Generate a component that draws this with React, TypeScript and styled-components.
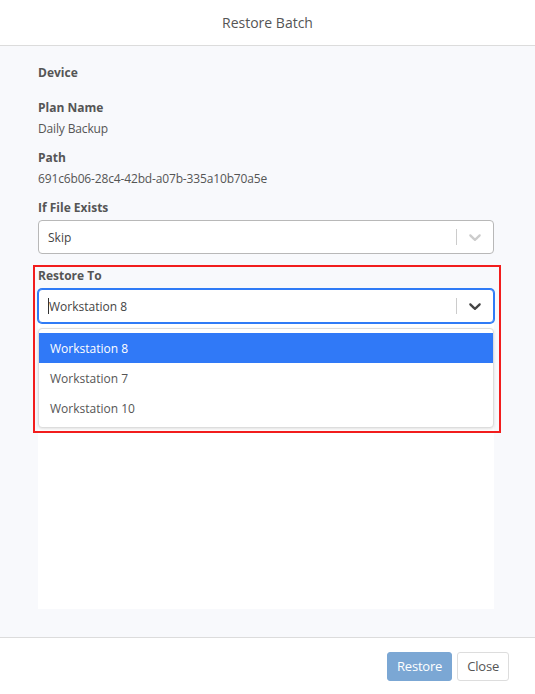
import styled, { createGlobalStyle } from "styled-components";

const GlobalStyle = createGlobalStyle`
  html, body {
    margin: 0;
    padding: 0;
    height: 100%;
  }
  body {
    font-family: "Open Sans", "Liberation Sans", sans-serif;
    color: #555;
    background: #fff;
  }
  #root {
    height: 100%;
  }
  * {
    box-sizing: border-box;
  }
`;

const Modal = styled.div`
  display: flex;
  flex-direction: column;
  height: 100vh;
  background: #fff;
`;

const Header = styled.div`
  height: 46px;
  border-bottom: 1px solid #dcdcdc;
  display: flex;
  align-items: center;
  justify-content: center;
  font-size: 14px;
  color: #555;
`;

const Body = styled.div`
  flex: 1;
  display: flex;
  flex-direction: column;
  background: #f8f9fc;
  padding: 17px 41px 28px 38px;
  min-height: 0;
`;

const Field = styled.div<{ $space?: number }>`
  position: relative;
  margin-bottom: ${(p) => p.$space ?? 9}px;
`;

const Label = styled.div`
  font-size: 12px;
  font-weight: 700;
  line-height: 20px;
  color: #555;
`;

const Value = styled.div`
  font-size: 12px;
  line-height: 20px;
  margin-top: 1px;
  color: #555;
  letter-spacing: -0.15px;
`;

const SelectBox = styled.div<{ $focused?: boolean }>`
  position: relative;
  margin-top: ${(p) => (p.$focused ? 3 : 2)}px;
  height: 34px;
  display: flex;
  align-items: center;
  background: #fff;
  border-radius: 4px;
  border: 1px solid ${(p) => (p.$focused ? "#2f7bf6" : "#b8b8b8")};
  box-shadow: ${(p) => (p.$focused ? "0 0 0 1px #2f7bf6" : "none")};
`;

const SelectValue = styled.div`
  flex: 1;
  padding-left: 9px;
  font-size: 12px;
  color: #444;
  display: flex;
  align-items: center;
`;

const Caret = styled.span`
  display: inline-block;
  width: 1px;
  height: 16px;
  background: #333;
`;

const Separator = styled.span`
  width: 1px;
  align-self: stretch;
  margin: 8px 0;
  background: #ccc;
`;

const Indicator = styled.div<{ $dark?: boolean }>`
  padding: 0 8px;
  display: flex;
  align-items: center;
  color: ${(p) => (p.$dark ? "#444" : "#ccc")};
`;

const Menu = styled.div`
  position: absolute;
  top: calc(100% + 6px);
  left: -1px;
  right: -1px;
  z-index: 2;
  background: #fff;
  border: 1px solid #ddd;
  border-radius: 4px;
  box-shadow: 0 1px 3px rgba(0, 0, 0, 0.12);
  padding: 4px 0;
`;

const Option = styled.div<{ $active?: boolean }>`
  height: 30px;
  display: flex;
  align-items: center;
  padding-left: 11px;
  font-size: 12px;
  background: ${(p) => (p.$active ? "#3079f7" : "#fff")};
  color: ${(p) => (p.$active ? "#fff" : "#555")};
`;

const Highlight = styled.div`
  position: absolute;
  top: -1px;
  left: -5px;
  right: -7px;
  height: 168px;
  border: 2px solid #f21d1d;
  z-index: 3;
  pointer-events: none;
`;

const Panel = styled.div`
  flex: 1;
  background: #fff;
`;

const Footer = styled.div`
  height: 57px;
  border-top: 1px solid #dcdcdc;
  display: flex;
  align-items: center;
  justify-content: flex-end;
  gap: 5px;
  padding-right: 26px;
`;

const Button = styled.button<{ $primary?: boolean }>`
  height: 29px;
  padding: 0 9px;
  font-family: inherit;
  font-size: 13px;
  letter-spacing: -0.2px;
  border-radius: 3px;
  border: 1px solid ${(p) => (p.$primary ? "#7ba7d4" : "#ddd")};
  background: ${(p) => (p.$primary ? "#7ba7d4" : "#fff")};
  color: ${(p) => (p.$primary ? "#fff" : "#555")};
  cursor: pointer;
`;

function Chevron() {
  return (
    <svg width="20" height="20" viewBox="0 0 20 20" fill="currentColor">
      <path d="M4.516 7.548c0.436-0.446 1.043-0.481 1.576 0l3.908 3.747 3.908-3.747c0.533-0.481 1.141-0.446 1.574 0 0.436 0.445 0.408 1.197 0 1.615-0.406 0.418-4.695 4.502-4.695 4.502-0.217 0.223-0.502 0.335-0.787 0.335s-0.57-0.112-0.789-0.335c0 0-4.287-4.084-4.695-4.502s-0.436-1.170 0-1.615z" />
    </svg>
  );
}

const targets = ["Workstation 8", "Workstation 7", "Workstation 10"];

export default function App() {
  return (
    <>
      <GlobalStyle />
      <Modal>
        <Header>Restore Batch</Header>
        <Body>
          <Field $space={15}>
            <Label>Device</Label>
          </Field>
          <Field>
            <Label>Plan Name</Label>
            <Value>Daily Backup</Value>
          </Field>
          <Field>
            <Label>Path</Label>
            <Value>691c6b06-28c4-42bd-a07b-335a10b70a5e</Value>
          </Field>
          <Field $space={12}>
            <Label>If File Exists</Label>
            <SelectBox>
              <SelectValue>Skip</SelectValue>
              <Separator />
              <Indicator>
                <Chevron />
              </Indicator>
            </SelectBox>
          </Field>
          <Field $space={0}>
            <Highlight />
            <Label>Restore To</Label>
            <SelectBox $focused>
              <SelectValue>
                <Caret />
                Workstation 8
              </SelectValue>
              <Separator />
              <Indicator $dark>
                <Chevron />
              </Indicator>
              <Menu>
                {targets.map((t, idx) => (
                  <Option key={t} $active={idx === 0}>
                    {t}
                  </Option>
                ))}
              </Menu>
            </SelectBox>
          </Field>
          <Panel />
        </Body>
        <Footer>
          <Button $primary>Restore</Button>
          <Button>Close</Button>
        </Footer>
      </Modal>
    </>
  );
}
